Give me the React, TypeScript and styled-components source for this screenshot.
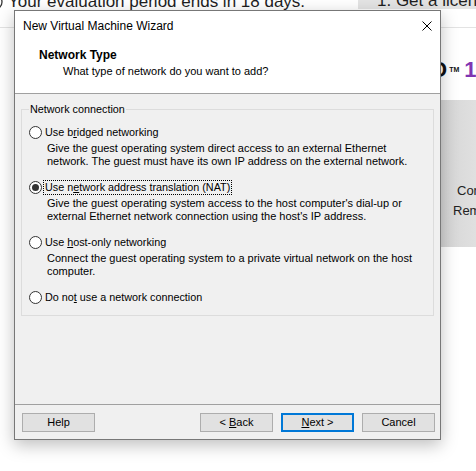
import React from "react";
import styled, { createGlobalStyle } from "styled-components";

const GlobalStyle = createGlobalStyle`
  html, body { margin: 0; padding: 0; background: #fff; overflow: hidden; }
  body { font-family: "Liberation Sans", Arial, sans-serif; }
  * { box-sizing: border-box; }
`;

const Page = styled.div`
  position: relative;
  width: 476px;
  height: 471px;
  overflow: hidden;
  background: #fff;
  display: flex;
  flex-direction: column;
`;

const TopStrip = styled.div`
  height: 28px;
  flex-shrink: 0;
  border-bottom: 1px solid #e3e3e3;
  display: flex;
  align-items: flex-start;
  overflow: hidden;
`;

const Notice = styled.div`
  flex: 1;
  display: flex;
  align-items: center;
  gap: 5px;
  margin-top: -8px;
  margin-left: -13px;
  font-size: 17px;
  line-height: 20px;
  color: #1e1e1e;
  white-space: nowrap;
`;

const LicenseBox = styled.div`
  width: 118px;
  height: 9px;
  background: #e4e4e4;
  overflow: hidden;
  flex-shrink: 0;
`;

const LicenseText = styled.div`
  margin-top: -9px;
  padding-left: 19px;
  font-size: 17px;
  line-height: 20px;
  color: #1e1e1e;
  white-space: nowrap;
`;

const Main = styled.div`
  flex: 1;
  display: flex;
  justify-content: flex-end;
`;

const SideColumn = styled.div`
  width: 46px;
  display: flex;
  flex-direction: column;
`;

const Logo = styled.div`
  margin-top: 33px;
  font-size: 22px;
  font-weight: bold;
  line-height: 18px;
  white-space: nowrap;
  color: #111;
`;

const Tm = styled.span`
  font-size: 7px;
  vertical-align: top;
  margin: 0 5px 0 2px;
`;

const Version = styled.span`
  color: #7f35b2;
`;

const GrayPanel = styled.div`
  margin-top: 21px;
  height: 147px;
  background: linear-gradient(to right, #cfcfcf 0px, #d6d6d6 14px, #e0e0e0 46px);
  padding-top: 81px;
  font-size: 13px;
  line-height: 20px;
  color: #222;
  white-space: nowrap;
  overflow: hidden;
`;

const PanelLine = styled.div<{ $indent: number }>`
  padding-left: ${(p) => p.$indent}px;
`;

const Dialog = styled.div`
  position: absolute;
  left: 14px;
  top: 10px;
  width: 427px;
  height: 430px;
  border: 1px solid #777;
  background: #f0f0f0;
  box-shadow: 0 5px 16px rgba(0, 0, 0, 0.26);
  display: flex;
  flex-direction: column;
  font-family: "Liberation Sans", Arial, sans-serif;
  font-size: 11px;
  color: #000;
`;

const TitleBar = styled.div`
  height: 31px;
  flex-shrink: 0;
  background: #fff;
  display: flex;
  align-items: center;
  justify-content: space-between;
  padding: 0 8px 2px 8px;
  font-size: 12px;
`;

const CloseIcon = styled.svg`
  width: 10px;
  height: 10px;
  display: block;
`;

const Header = styled.div`
  flex-shrink: 0;
  background: #fff;
  padding: 7px 0 15px 24px;
  border-bottom: 1px solid #a0a0a0;
`;

const HeaderTitle = styled.div`
  font-size: 12px;
  font-weight: bold;
  line-height: 13px;
`;

const HeaderSub = styled.div`
  margin-top: 3px;
  padding-left: 24px;
  line-height: 13px;
`;

const Content = styled.div`
  flex: 1;
  padding: 9px 6px 0 6px;
`;

const GroupBox = styled.fieldset`
  margin: 0;
  border: 1px solid #dcdcdc;
  padding: 0 7px 11px 7px;
  min-width: 0;
`;

const Legend = styled.legend`
  padding: 0 1px;
  font-size: 10.8px;
  line-height: 13px;
`;

const Options = styled.div`
  margin-top: 9px;
  display: flex;
  flex-direction: column;
  gap: 12px;
`;

const Option = styled.div`
  display: flex;
  flex-direction: column;
`;

const RadioRow = styled.div`
  display: flex;
  align-items: center;
  gap: 2px;
  height: 14px;
`;

const RadioCircle = styled.span<{ $checked?: boolean }>`
  width: 13px;
  height: 13px;
  flex-shrink: 0;
  border: 1px solid #333;
  border-radius: 50%;
  background: #fff;
  display: grid;
  place-items: center;
  &::after {
    content: "";
    width: 7px;
    height: 7px;
    border-radius: 50%;
    background: ${(p) => (p.$checked ? "#333" : "transparent")};
  }
`;

const RadioLabel = styled.span<{ $focused?: boolean }>`
  padding: 0 1px;
  font-size: 10.8px;
  line-height: 13px;
  outline: ${(p) => (p.$focused ? "1px dotted #000" : "none")};
  white-space: nowrap;
`;

const Desc = styled.div`
  margin-top: 3px;
  padding-left: 18px;
  line-height: 13px;
`;

const Footer = styled.div`
  height: 35px;
  flex-shrink: 0;
  border-top: 1px solid #a0a0a0;
  padding: 8px 5px 0 7px;
  display: flex;
  align-items: flex-start;
`;

const ButtonGroup = styled.div`
  margin-left: auto;
  display: flex;
  gap: 8px;
`;

const Button = styled.button<{ $default?: boolean }>`
  width: 73px;
  height: 19px;
  margin: 0;
  padding: 0;
  background: #e1e1e1;
  border: ${(p) => (p.$default ? "2px solid #0078d7" : "1px solid #adadad")};
  font-family: "Liberation Sans", Arial, sans-serif;
  font-size: 11px;
  line-height: 13px;
  color: #000;
  text-align: center;
`;

const InfoIcon = styled.svg`
  width: 16px;
  height: 16px;
  flex-shrink: 0;
`;

type Opt = {
  key: string;
  label: React.ReactNode;
  desc: React.ReactNode;
  checked?: boolean;
};

const options: Opt[] = [
  {
    key: "bridged",
    label: (
      <>
        Use b<u>r</u>idged networking
      </>
    ),
    desc: (
      <>
        Give the guest operating system direct access to an external Ethernet
        <br />
        network. The guest must have its own IP address on the external network.
      </>
    ),
  },
  {
    key: "nat",
    checked: true,
    label: (
      <>
        Use n<u>e</u>twork address translation (NAT)
      </>
    ),
    desc: (
      <>
        Give the guest operating system access to the host computer's dial-up or
        <br />
        external Ethernet network connection using the host's IP address.
      </>
    ),
  },
  {
    key: "host",
    label: (
      <>
        Use <u>h</u>ost-only networking
      </>
    ),
    desc: (
      <>
        Connect the guest operating system to a private virtual network on the host
        <br />
        computer.
      </>
    ),
  },
  {
    key: "none",
    label: (
      <>
        Do no<u>t</u> use a network connection
      </>
    ),
    desc: null,
  },
];

export default function App() {
  return (
    <>
      <GlobalStyle />
      <Page>
        <TopStrip>
          <Notice>
            <InfoIcon viewBox="0 0 16 16">
              <circle cx="8" cy="8" r="7" fill="none" stroke="#333" strokeWidth="1.3" />
            </InfoIcon>
            Your evaluation period ends in 18 days.
          </Notice>
          <LicenseBox>
            <LicenseText>1. Get a license key</LicenseText>
          </LicenseBox>
        </TopStrip>
        <Main>
          <SideColumn>
            <Logo>
              O<Tm>TM</Tm>
              <Version>17</Version>
            </Logo>
            <GrayPanel>
              <PanelLine $indent={27}>Connect to a</PanelLine>
              <PanelLine $indent={23}>Remote Server</PanelLine>
            </GrayPanel>
          </SideColumn>
        </Main>

        <Dialog>
          <TitleBar>
            <span>New Virtual Machine Wizard</span>
            <CloseIcon viewBox="0 0 10 10">
              <path d="M0.5 0.5 L9.5 9.5 M9.5 0.5 L0.5 9.5" stroke="#000" strokeWidth="1" fill="none" />
            </CloseIcon>
          </TitleBar>
          <Header>
            <HeaderTitle>Network Type</HeaderTitle>
            <HeaderSub>What type of network do you want to add?</HeaderSub>
          </Header>
          <Content>
            <GroupBox>
              <Legend>Network connection</Legend>
              <Options>
                {options.map((o) => (
                  <Option key={o.key}>
                    <RadioRow>
                      <RadioCircle $checked={o.checked} />
                      <RadioLabel $focused={o.checked}>{o.label}</RadioLabel>
                    </RadioRow>
                    {o.desc && <Desc>{o.desc}</Desc>}
                  </Option>
                ))}
              </Options>
            </GroupBox>
          </Content>
          <Footer>
            <Button>Help</Button>
            <ButtonGroup>
              <Button>
                &lt; <u>B</u>ack
              </Button>
              <Button $default>
                <u>N</u>ext &gt;
              </Button>
              <Button>Cancel</Button>
            </ButtonGroup>
          </Footer>
        </Dialog>
      </Page>
    </>
  );
}
